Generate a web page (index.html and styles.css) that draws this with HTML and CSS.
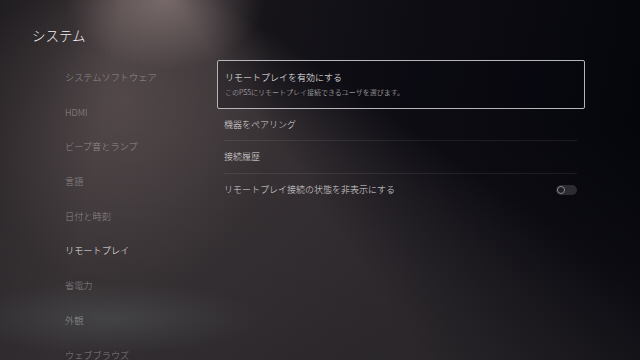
FILE: index.html
```html
<!DOCTYPE html>
<html lang="ja">
<head>
<meta charset="utf-8">
<title>システム</title>
<link rel="stylesheet" href="styles.css">
</head>
<body>
<div class="screen">
  <h1 class="title">システム</h1>
  <div class="main">
    <nav class="side">
      <div class="side-item">システムソフトウェア</div>
      <div class="side-item">HDMI</div>
      <div class="side-item">ビープ音とランプ</div>
      <div class="side-item">言語</div>
      <div class="side-item">日付と時刻</div>
      <div class="side-item active">リモートプレイ</div>
      <div class="side-item">省電力</div>
      <div class="side-item">外観</div>
      <div class="side-item">ウェブブラウズ</div>
    </nav>
    <section class="content">
      <div class="card">
        <div class="card-title">リモートプレイを有効にする</div>
        <div class="card-sub">このPS5にリモートプレイ接続できるユーザを選びます。</div>
      </div>
      <div class="row">機器をペアリング</div>
      <div class="row">接続履歴</div>
      <div class="row last">
        <span>リモートプレイ接続の状態を非表示にする</span>
        <span class="toggle"><span class="knob"></span></span>
      </div>
    </section>
  </div>
</div>
</body>
</html>
```
FILE: styles.css
```css
* { box-sizing: border-box; }
html, body { margin: 0; padding: 0; }
body {
  width: 640px;
  height: 360px;
  overflow: hidden;
  font-family: "Noto Sans CJK JP", "Noto Sans", sans-serif;
  font-weight: 300;
  background:
    radial-gradient(ellipse 150px 36px at 110px 318px, rgba(88,94,98,0.42), rgba(88,94,98,0) 100%),
    radial-gradient(ellipse 100px 70px at 165px 0px, rgba(170,150,148,0.5), rgba(170,150,148,0) 100%),
    radial-gradient(ellipse 150px 190px at 125px 100px, rgba(110,96,96,0.38), rgba(110,96,96,0) 100%),
    linear-gradient(to bottom, rgba(18,17,20,0) 35%, rgba(28,28,32,0.4) 100%),
    conic-gradient(from 0deg at 133px -60px, rgba(105,92,92,0) 124deg, rgba(105,92,92,0.42) 145deg, rgba(105,92,92,0.48) 190deg, rgba(105,92,92,0.18) 215deg, rgba(105,92,92,0) 240deg),
    linear-gradient(100deg, #201d20 0%, #19171b 30%, #0e0d14 60%, #04040b 100%);
}
.screen {
  width: 640px;
  height: 360px;
  display: flex;
  flex-direction: column;
  overflow: hidden;
}
.title {
  flex-shrink: 0;
  margin: 0;
  padding: 25px 0 0 32px;
  height: 60px;
  font-size: 13.5px;
  line-height: 20px;
  font-weight: 300;
  color: #f4f2f2;
}
.main {
  flex-shrink: 0;
  display: flex;
  padding-left: 65px;
}
.side {
  width: 152px;
  display: flex;
  flex-direction: column;
}
.side-item {
  flex-shrink: 0;
  height: 34.7px;
  line-height: 34.7px;
  font-size: 9.2px;
  color: rgba(255,255,255,0.4);
  white-space: nowrap;
}
.side-item.active {
  color: #ecebeb;
}
.content {
  width: 368px;
  display: flex;
  flex-direction: column;
}
.card {
  border: 1px solid #b6b5bb;
  border-radius: 2px;
  padding: 10px 7px 11px;
  background: rgba(4,4,12,0.25);
}
.card-title {
  font-size: 9px;
  line-height: 14px;
  color: #f4f4f4;
}
.card-sub {
  margin-top: 2px;
  font-size: 7px;
  line-height: 10px;
  color: #c4c3c6;
}
.row {
  margin: 0 8px 0 7px;
  height: 32.3px;
  display: flex;
  align-items: center;
  justify-content: space-between;
  font-size: 9px;
  color: #dcdbdd;
  border-bottom: 1px solid rgba(255,255,255,0.08);
}
.row.last { border-bottom: none; }
.toggle {
  width: 21px;
  height: 10px;
  border-radius: 5px;
  background: #2b2b31;
  display: flex;
  align-items: center;
  padding-left: 1px;
}
.knob {
  width: 8px;
  height: 8px;
  border-radius: 50%;
  border: 1px solid #8a8a90;
  background: #1e1e24;
}
```
